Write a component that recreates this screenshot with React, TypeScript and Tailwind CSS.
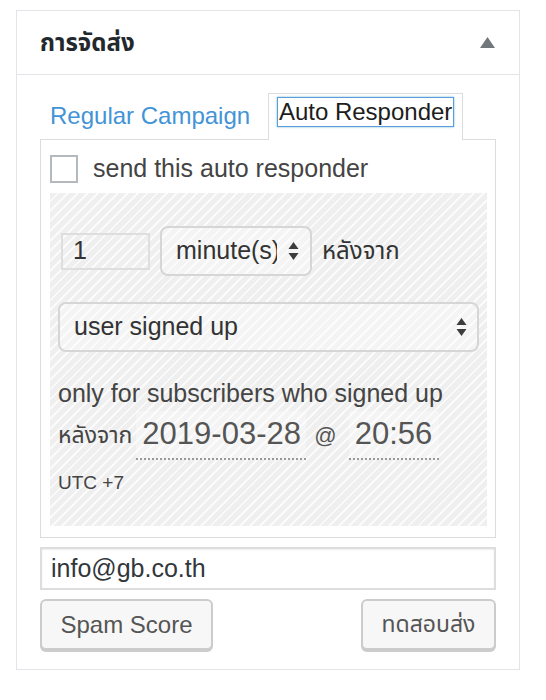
import React from 'react';

const font = { fontFamily: '"Liberation Sans", "Noto Sans", "Noto Sans Thai", "DejaVu Sans", sans-serif' };

function SelectArrows() {
    return (
        <svg width="11" height="20" viewBox="0 0 11 20" className="shrink-0">
            <path d="M5.5 1 L10.5 8 L0.5 8 Z" fill="#3c3c3c" />
            <path d="M5.5 19 L10.5 12 L0.5 12 Z" fill="#3c3c3c" />
        </svg>
    );
}

export default function App() {
    return (
        <div className="w-[546px] h-[700px] bg-white pt-[10px] pl-[16px] text-[#444]" style={font}>
            <div className="w-[504px] border border-[#e2e4e7] bg-white">
                {/* header */}
                <div className="h-[64px] flex items-center justify-between border-b border-[#e2e4e7] pl-[23px] pr-[24px]">
                    <h2 className="text-[24px] font-bold text-[#23282d] leading-none">การจัดส่ง</h2>
                    <svg width="15" height="11" viewBox="0 0 15 11">
                        <path d="M7.5 0 L15 11 L0 11 Z" fill="#72777c" />
                    </svg>
                </div>

                <div className="px-[23px] pt-[18px] pb-[19px]">
                    {/* tabs */}
                    <div className="flex items-end h-[46px] relative">
                        <div className="pl-[10px] pr-[18px] h-[46px] flex items-center">
                            <span className="text-[24px] text-[#4394d6]">Regular Campaign</span>
                        </div>
                        <div className="h-[47px] w-[195px] border border-b-0 border-[#dcdcdc] bg-white flex items-start justify-center pt-[3px] relative z-10 -mb-px">
                            <span className="text-[24px] leading-[28px] text-[#1d1d1d] border-[1.5px] border-[#5b9dd9] px-[1px] shadow-[0_0_2px_rgba(30,140,190,0.6)]">Auto Responder</span>
                        </div>
                    </div>

                    {/* tab content */}
                    <div className="border border-[#dcdcdc] bg-white pl-[9px] pr-[8px] pt-[14px] pb-[11px]">
                        <label className="flex items-center gap-[15px] h-[29px]">
                            <span className="w-[28px] h-[28px] border-2 border-[#b4b9be] bg-white shrink-0" />
                            <span className="text-[25px] text-[#444]">send this auto responder</span>
                        </label>

                        <div className="mt-[10px] h-[333px] px-[8px] pt-[33px] bg-[repeating-linear-gradient(135deg,#efefef_0px,#efefef_5px,#fbfbfb_5px,#fbfbfb_7px)]">
                            <div className="flex items-center h-[50px]">
                                <div className="ml-[3px] w-[89px] h-[37px] border-2 border-[#dedede] flex items-center pl-[10px] text-[25px] text-[#333]">1</div>
                                <div className="ml-[10px] w-[152px] h-[50px] rounded-[8px] border-2 border-[#d6d6d6] bg-white/30 flex items-center pl-[14px]">
                                    <span className="w-[101px] text-[25px] text-[#333] overflow-hidden whitespace-nowrap">minute(s)</span>
                                    <span className="ml-[11px] flex"><SelectArrows /></span>
                                </div>
                                <span className="ml-[10px] text-[24px] text-[#333]">หลังจาก</span>
                            </div>

                            <div className="mt-[26px] h-[50px] rounded-[8px] border-2 border-[#d6d6d6] bg-white/30 flex items-center justify-between pl-[14px] pr-[10px]">
                                <span className="text-[25px] text-[#333]">user signed up</span>
                                <SelectArrows />
                            </div>

                            <p className="mt-[25px] text-[25px] leading-[32px] text-[#444]">only for subscribers who signed up</p>
                            <div className="flex items-center mt-[1px] h-[50px]">
                                <span className="text-[23px] text-[#444]">หลังจาก</span>
                                <span className="ml-[4px] w-[170px] h-[49px] border-b-2 border-dotted border-[#999] bg-white/30 flex items-center pl-[6px] text-[31px] text-[#555]">2019-03-28</span>
                                <span className="ml-[8px] text-[22px] text-[#555]">@</span>
                                <span className="ml-[12px] w-[90px] h-[49px] border-b-2 border-dotted border-[#999] bg-white/30 flex items-center pl-[6px] text-[31px] text-[#555]">20:56</span>
                            </div>
                            <p className="mt-[9px] text-[19px] text-[#444]">UTC +7</p>
                        </div>
                    </div>

                    {/* email */}
                    <div className="mt-[9px] h-[43px] border-2 border-[#dddddd] shadow-[inset_0_1px_2px_rgba(0,0,0,0.07)] flex items-center pl-[9px] text-[25px] text-[#32373c]">
                        info@gb.co.th
                    </div>

                    {/* buttons */}
                    <div className="mt-[9px] flex justify-between">
                        <button className="w-[173px] h-[51px] rounded-[6px] border-2 border-[#cccccc] bg-[#f7f7f7] shadow-[0_2px_0_#cccccc] text-[24px] text-[#555]">Spam Score</button>
                        <button className="w-[135px] h-[51px] rounded-[6px] border-2 border-[#cccccc] bg-[#f7f7f7] shadow-[0_2px_0_#cccccc] text-[23px] text-[#555]">ทดสอบส่ง</button>
                    </div>
                </div>
            </div>
        </div>
    );
}
